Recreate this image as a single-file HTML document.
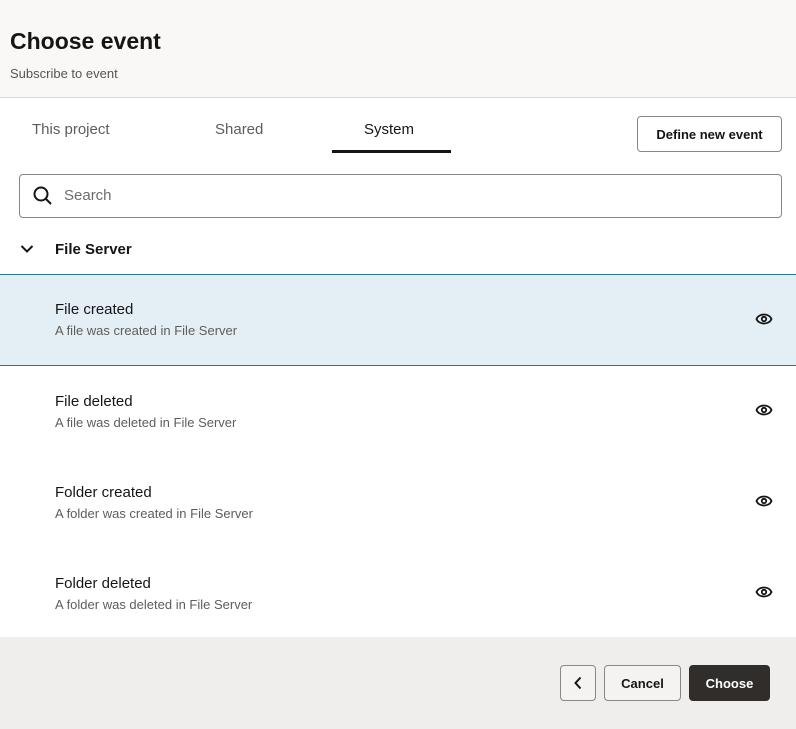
<!DOCTYPE html>
<html><head><meta charset="utf-8"><style>
*{box-sizing:border-box;margin:0;padding:0}
body{width:796px;height:729px;overflow:hidden;background:#fff;font-family:"Liberation Sans",sans-serif;color:#161513;position:relative}
.hdr{position:absolute;left:0;top:0;width:796px;height:98px;background:#f9f8f6;border-bottom:1px solid #dcdad6}
h1{position:absolute;left:10px;top:28px;font-size:23px;font-weight:bold}
.sub{position:absolute;left:10px;top:66px;font-size:13px;color:#555}
.tab{position:absolute;top:121px;font-size:15px;color:#5f5d5a}
.btn{position:absolute;border:1px solid #8a8785;border-radius:4px;background:#fff;font-size:13px;font-weight:bold;display:flex;align-items:center;justify-content:center}
.search{position:absolute;left:19px;top:174px;width:763px;height:44px;border:1px solid #8a8785;border-radius:4px}
.row{position:absolute;left:0;width:796px;height:91px}
.t{position:absolute;left:55px;top:27px;font-size:15px}
.d{position:absolute;left:55px;top:49px;font-size:13px;color:#5f5d5a}
.eye{position:absolute;left:755px;top:36px}
.ftr{position:absolute;left:0;top:637px;width:796px;height:92px;background:#efeeec}
</style></head><body>
<div class="hdr"><h1>Choose event</h1><div class="sub">Subscribe to event</div></div>
<div class="tab" style="left:32px">This project</div>
<div class="tab" style="left:215px">Shared</div>
<div class="tab" style="left:364px;color:#161513">System</div>
<div style="position:absolute;left:332px;top:150px;width:119px;height:3px;background:#161513"></div>
<div class="btn" style="left:637px;top:116px;width:145px;height:36px">Define new event</div>
<div class="search">
<svg style="position:absolute;left:12px;top:10px" width="22" height="22" viewBox="0 0 22 22"><circle cx="9" cy="9" r="6.5" fill="none" stroke="#161513" stroke-width="2"/><path d="M14 14l5 5" stroke="#161513" stroke-width="2"/></svg>
<span style="position:absolute;left:44px;top:12px;font-size:15px;color:#6f6c69">Search</span></div>
<svg style="position:absolute;left:20px;top:244px" width="14" height="10" viewBox="0 0 14 10"><path d="M1.5 2l5.5 5.5L12.5 2" fill="none" stroke="#161513" stroke-width="2"/></svg>
<div style="position:absolute;left:55px;top:241px;font-size:15px;font-weight:bold">File Server</div>
<div class="row" style="top:274px;height:92px;background:#e3eff5;border-top:1px solid #2b7a9a;border-bottom:1px solid #3d6f86"><div class="t" style="top:26px">File created</div><div class="d" style="top:48px">A file was created in File Server</div><svg class="eye" width="18" height="16" viewBox="0 0 18 16"><path d="M1.5 8C4 2 14 2 16.5 8C14 14 4 14 1.5 8Z" fill="none" stroke="#161513" stroke-width="1.8"/><circle cx="9" cy="8" r="2.2" fill="none" stroke="#161513" stroke-width="1.8"/></svg></div>
<div class="row" style="top:366px"><div class="t">File deleted</div><div class="d">A file was deleted in File Server</div><svg class="eye" width="18" height="16" viewBox="0 0 18 16"><path d="M1.5 8C4 2 14 2 16.5 8C14 14 4 14 1.5 8Z" fill="none" stroke="#161513" stroke-width="1.8"/><circle cx="9" cy="8" r="2.2" fill="none" stroke="#161513" stroke-width="1.8"/></svg></div>
<div class="row" style="top:457px"><div class="t">Folder created</div><div class="d">A folder was created in File Server</div><svg class="eye" width="18" height="16" viewBox="0 0 18 16"><path d="M1.5 8C4 2 14 2 16.5 8C14 14 4 14 1.5 8Z" fill="none" stroke="#161513" stroke-width="1.8"/><circle cx="9" cy="8" r="2.2" fill="none" stroke="#161513" stroke-width="1.8"/></svg></div>
<div class="row" style="top:548px"><div class="t">Folder deleted</div><div class="d">A folder was deleted in File Server</div><svg class="eye" width="18" height="16" viewBox="0 0 18 16"><path d="M1.5 8C4 2 14 2 16.5 8C14 14 4 14 1.5 8Z" fill="none" stroke="#161513" stroke-width="1.8"/><circle cx="9" cy="8" r="2.2" fill="none" stroke="#161513" stroke-width="1.8"/></svg></div>
<div class="ftr"></div>
<div class="btn" style="left:560px;top:665px;width:36px;height:36px;background:#f4f3f1"><svg width="10" height="14" viewBox="0 0 10 14"><path d="M7.5 1.5L2.5 7l5 5.5" fill="none" stroke="#161513" stroke-width="2"/></svg></div>
<div class="btn" style="left:604px;top:665px;width:77px;height:36px;background:#f4f3f1">Cancel</div>
<div class="btn" style="left:689px;top:665px;width:81px;height:36px;background:#312d2a;border-color:#312d2a;color:#fff">Choose</div>
</body></html>
